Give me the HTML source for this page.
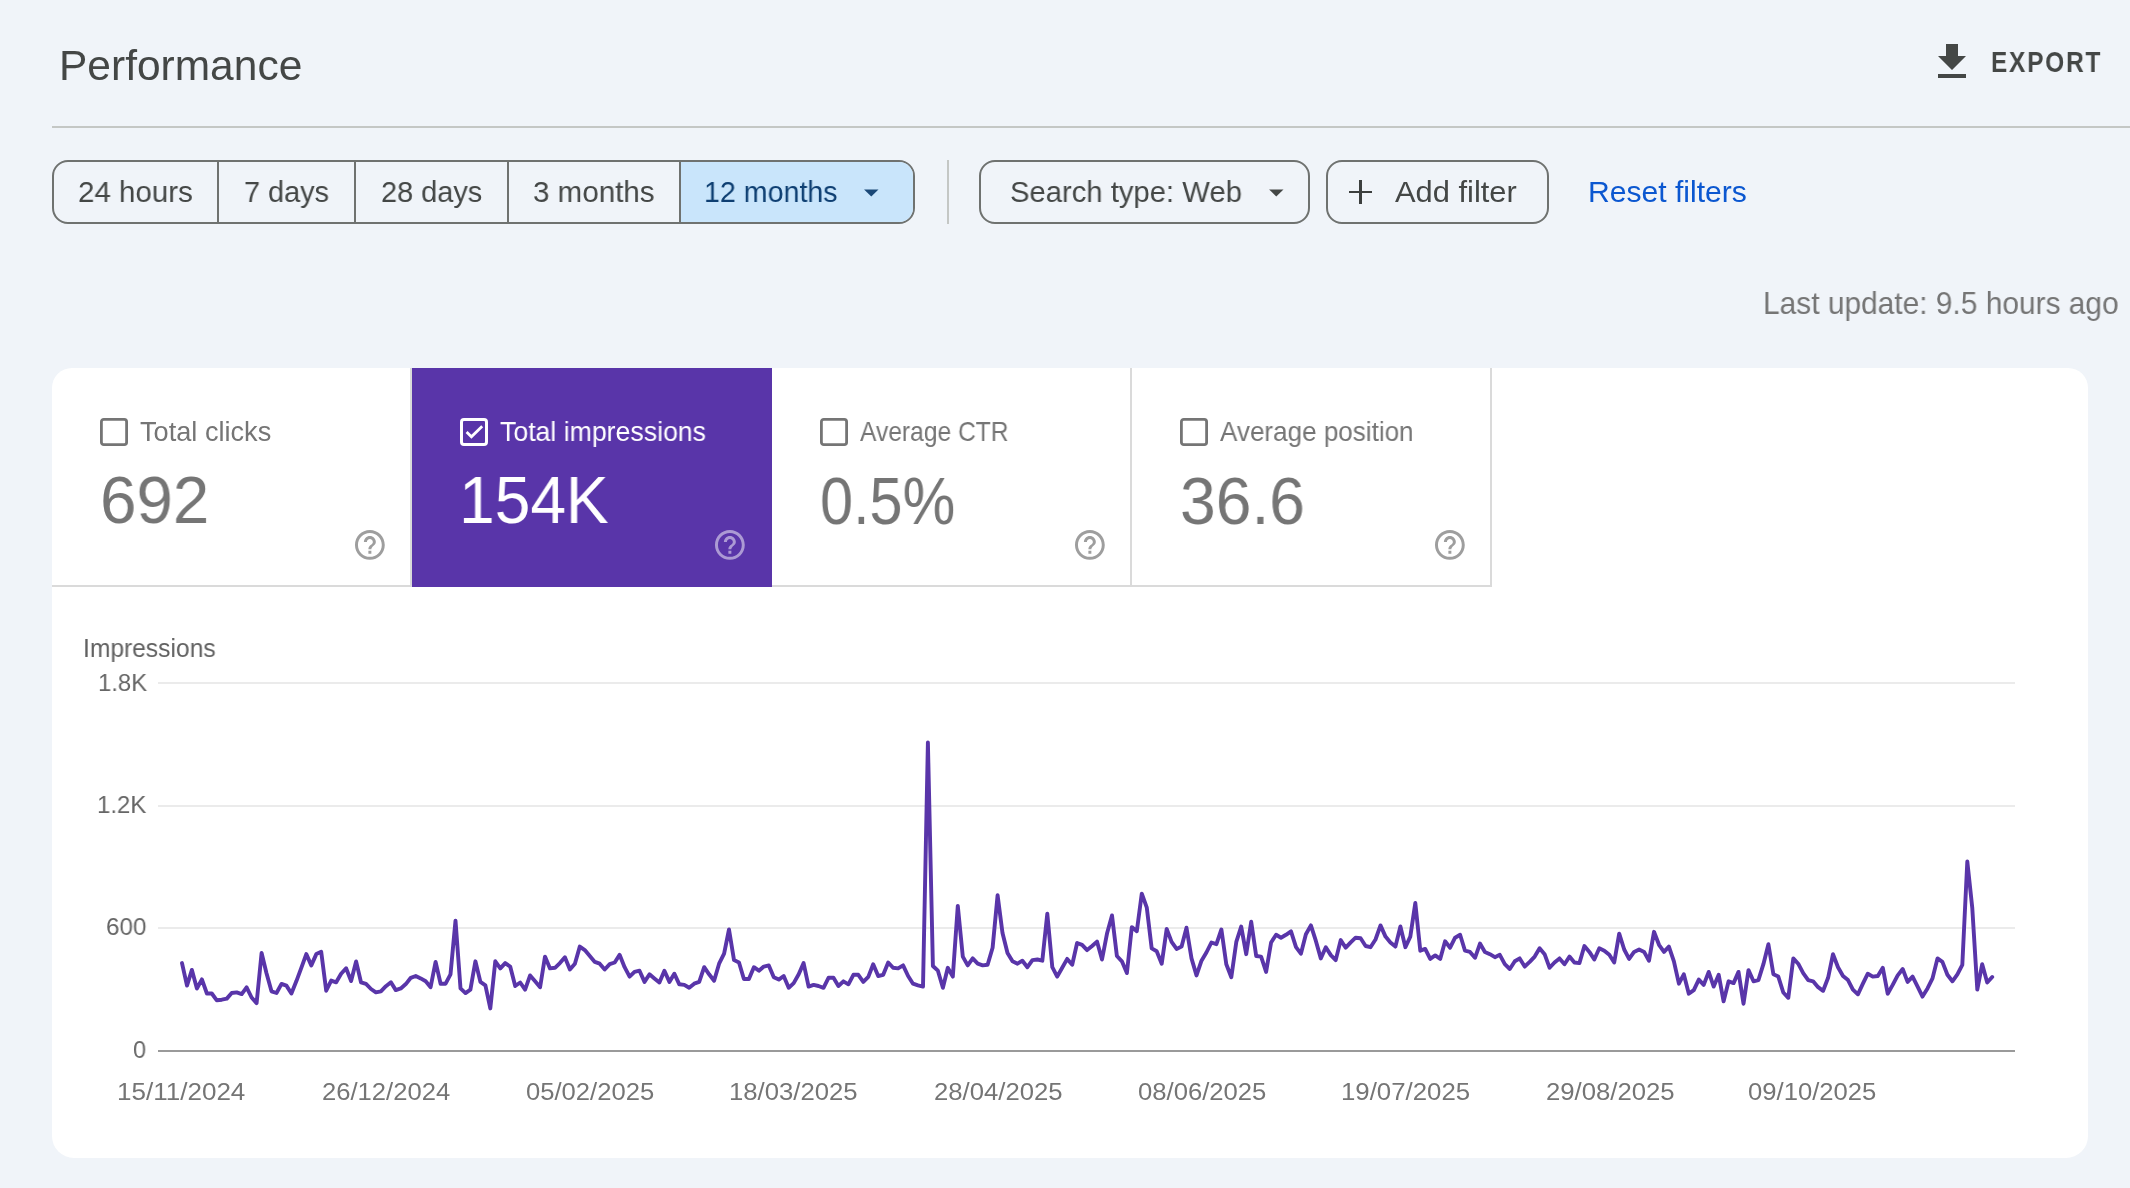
<!DOCTYPE html>
<html><head><meta charset="utf-8">
<style>
html,body{margin:0;padding:0;}
body{width:2130px;height:1188px;background:#f0f4f9;position:relative;overflow:hidden;font-family:"Liberation Sans",sans-serif;}
.t{position:absolute;white-space:nowrap;line-height:1;transform-origin:0 0;will-change:transform;}
.a{position:absolute;}
</style></head>
<body>

<div class="t" style="left:58.98px;top:45.00px;font-size:42.2px;color:#444746;letter-spacing:0px;transform:scaleX(1.0073)">Performance</div>
<svg class="a" style="left:1927.5px;top:38px" width="48" height="48" viewBox="0 0 24 24"><path fill="#444746" d="M19 9h-4V3H9v6H5l7 7 7-7zM5 18v2h14v-2H5z"/></svg>
<div class="t" style="left:1991.43px;top:48.10px;font-size:29.1px;font-weight:bold;color:#444746;letter-spacing:2.2px;transform:scaleX(0.8376)">EXPORT</div>
<div class="a" style="left:52px;top:126px;width:2078px;height:2px;background:#c4c7c5"></div>
<div class="a" style="left:52px;top:160px;width:863px;height:64px;box-sizing:border-box;border:2px solid #6f7270;border-radius:16px;overflow:hidden"><div class="a" style="left:627px;top:0;width:236px;height:60px;background:#c9e5fb"></div><div class="a" style="left:163px;top:0;width:2px;height:60px;background:#6f7270"></div><div class="a" style="left:300px;top:0;width:2px;height:60px;background:#6f7270"></div><div class="a" style="left:453px;top:0;width:2px;height:60px;background:#6f7270"></div><div class="a" style="left:625px;top:0;width:2px;height:60px;background:#6f7270"></div></div>
<div class="t" style="left:77.79px;top:176.60px;font-size:30.1px;color:#444746;letter-spacing:0px;transform:scaleX(0.9812)">24 hours</div>
<div class="t" style="left:244.19px;top:176.60px;font-size:30.1px;color:#444746;letter-spacing:0px;transform:scaleX(0.9601)">7 days</div>
<div class="t" style="left:380.72px;top:176.60px;font-size:30.1px;color:#444746;letter-spacing:0px;transform:scaleX(0.9615)">28 days</div>
<div class="t" style="left:533.31px;top:176.60px;font-size:30.1px;color:#444746;letter-spacing:0px;transform:scaleX(0.9818)">3 months</div>
<div class="t" style="left:703.66px;top:176.80px;font-size:30.1px;color:#0e3f72;letter-spacing:0px;transform:scaleX(0.9501)">12 months</div>
<svg class="a" style="left:853.6px;top:174.6px" width="34.56" height="34.56" viewBox="0 0 24 24"><path fill="#1a4877" d="M7 10l5 5 5-5z"/></svg>
<div class="a" style="left:947px;top:160px;width:2px;height:64px;background:#c4c7c5"></div>
<div class="a" style="left:979px;top:160px;width:331px;height:64px;box-sizing:border-box;border:2px solid #6f7270;border-radius:16px"></div>
<div class="t" style="left:1010.48px;top:176.80px;font-size:30.1px;color:#444746;letter-spacing:0px;transform:scaleX(0.9717)">Search type: Web</div>
<svg class="a" style="left:1259.2px;top:174.6px" width="34.56" height="34.56" viewBox="0 0 24 24"><path fill="#444746" d="M7 10l5 5 5-5z"/></svg>
<div class="a" style="left:1326px;top:160px;width:223px;height:64px;box-sizing:border-box;border:2px solid #6f7270;border-radius:16px"></div>
<div class="a" style="left:1348.5px;top:190.5px;width:23.8px;height:2.9px;background:#3c3f3e"></div>
<div class="a" style="left:1359px;top:180.1px;width:2.9px;height:23.7px;background:#3c3f3e"></div>
<div class="t" style="left:1395.04px;top:176.80px;font-size:30.1px;color:#444746;letter-spacing:0px;transform:scaleX(1.0252)">Add filter</div>
<div class="t" style="left:1587.79px;top:177.10px;font-size:30.0px;color:#0b57d0;letter-spacing:0px;transform:scaleX(1.0033)">Reset filters</div>
<div class="t" style="left:1762.72px;top:287.70px;font-size:31.1px;color:#757575;letter-spacing:0px;transform:scaleX(0.9613)">Last update: 9.5 hours ago</div>
<div class="a" style="left:52px;top:368px;width:2036px;height:790px;background:#fff;border-radius:20px 20px 22px 22px;overflow:hidden">
<div class="a" style="left:0;top:217px;width:1440px;height:2px;background:#dadada"></div>
<div class="a" style="left:358px;top:0;width:2px;height:219px;background:#dadada"></div>
<div class="a" style="left:360px;top:0;width:360px;height:219px;background:#5935a9"></div>
<div class="a" style="left:1078px;top:0;width:2px;height:219px;background:#dadada"></div>
<div class="a" style="left:1438px;top:0;width:2px;height:219px;background:#dadada"></div>
</div>
<svg class="a" style="left:100px;top:418px" width="28" height="28" viewBox="0 0 28 28"><rect x="1.4" y="1.4" width="25.2" height="25.2" rx="2.4" fill="none" stroke="#757575" stroke-width="2.8"/></svg>
<svg class="a" style="left:352.07px;top:527.02px" width="35.76" height="35.76" viewBox="0 0 24 24"><path fill="#9e9e9e" d="M11 18h2v-2h-2v2zm1-16C6.48 2 2 6.48 2 12s4.48 10 10 10 10-4.48 10-10S17.52 2 12 2zm0 18c-4.41 0-8-3.59-8-8s3.59-8 8-8 8 3.59 8 8-3.59 8-8 8zm0-14c-2.21 0-4 1.79-4 4h2c0-1.1.9-2 2-2s2 .9 2 2c0 2-3 1.75-3 5h2c0-2.25 3-2.5 3-5 0-2.21-1.79-4-4-4z"/></svg>
<svg class="a" style="left:460px;top:418px" width="28" height="28" viewBox="0 0 28 28"><rect x="1.5" y="1.5" width="25" height="25" rx="2.5" fill="none" stroke="#fff" stroke-width="3"/><path d="M6.6 14.1L11.4 18.8L22.2 8.2" fill="none" stroke="#fff" stroke-width="2.8"/></svg>
<svg class="a" style="left:712.07px;top:527.02px" width="35.76" height="35.76" viewBox="0 0 24 24"><path fill="rgba(255,255,255,0.5)" d="M11 18h2v-2h-2v2zm1-16C6.48 2 2 6.48 2 12s4.48 10 10 10 10-4.48 10-10S17.52 2 12 2zm0 18c-4.41 0-8-3.59-8-8s3.59-8 8-8 8 3.59 8 8-3.59 8-8 8zm0-14c-2.21 0-4 1.79-4 4h2c0-1.1.9-2 2-2s2 .9 2 2c0 2-3 1.75-3 5h2c0-2.25 3-2.5 3-5 0-2.21-1.79-4-4-4z"/></svg>
<svg class="a" style="left:820px;top:418px" width="28" height="28" viewBox="0 0 28 28"><rect x="1.4" y="1.4" width="25.2" height="25.2" rx="2.4" fill="none" stroke="#757575" stroke-width="2.8"/></svg>
<svg class="a" style="left:1072.07px;top:527.02px" width="35.76" height="35.76" viewBox="0 0 24 24"><path fill="#9e9e9e" d="M11 18h2v-2h-2v2zm1-16C6.48 2 2 6.48 2 12s4.48 10 10 10 10-4.48 10-10S17.52 2 12 2zm0 18c-4.41 0-8-3.59-8-8s3.59-8 8-8 8 3.59 8 8-3.59 8-8 8zm0-14c-2.21 0-4 1.79-4 4h2c0-1.1.9-2 2-2s2 .9 2 2c0 2-3 1.75-3 5h2c0-2.25 3-2.5 3-5 0-2.21-1.79-4-4-4z"/></svg>
<svg class="a" style="left:1180px;top:418px" width="28" height="28" viewBox="0 0 28 28"><rect x="1.4" y="1.4" width="25.2" height="25.2" rx="2.4" fill="none" stroke="#757575" stroke-width="2.8"/></svg>
<svg class="a" style="left:1432.07px;top:527.02px" width="35.76" height="35.76" viewBox="0 0 24 24"><path fill="#9e9e9e" d="M11 18h2v-2h-2v2zm1-16C6.48 2 2 6.48 2 12s4.48 10 10 10 10-4.48 10-10S17.52 2 12 2zm0 18c-4.41 0-8-3.59-8-8s3.59-8 8-8 8 3.59 8 8-3.59 8-8 8zm0-14c-2.21 0-4 1.79-4 4h2c0-1.1.9-2 2-2s2 .9 2 2c0 2-3 1.75-3 5h2c0-2.25 3-2.5 3-5 0-2.21-1.79-4-4-4z"/></svg>
<div class="t" style="left:139.68px;top:418.90px;font-size:26.9px;color:#757575;letter-spacing:0px;transform:scaleX(1.0096)">Total clicks</div>
<div class="t" style="left:500.00px;top:418.90px;font-size:26.9px;color:#ffffff;letter-spacing:0px;transform:scaleX(0.9915)">Total impressions</div>
<div class="t" style="left:860.31px;top:418.90px;font-size:26.9px;color:#757575;letter-spacing:0px;transform:scaleX(0.9145)">Average CTR</div>
<div class="t" style="left:1220.29px;top:418.90px;font-size:26.9px;color:#757575;letter-spacing:0px;transform:scaleX(0.9687)">Average position</div>
<div class="t" style="left:100.43px;top:467.30px;font-size:66.0px;color:#757575;letter-spacing:0px;transform:scaleX(0.9916)">692</div>
<div class="t" style="left:459.31px;top:467.20px;font-size:66.0px;color:#ffffff;letter-spacing:0px;transform:scaleX(0.9711)">154K</div>
<div class="t" style="left:820.36px;top:467.50px;font-size:66.0px;color:#757575;letter-spacing:0px;transform:scaleX(0.8996)">0.5%</div>
<div class="t" style="left:1180.15px;top:467.50px;font-size:66.0px;color:#757575;letter-spacing:0px;transform:scaleX(0.9723)">36.6</div>
<div class="t" style="left:83.17px;top:635.90px;font-size:24.9px;color:#616161;letter-spacing:0px;transform:scaleX(0.9883)">Impressions</div>
<div class="a" style="left:158px;top:682px;width:1857px;height:2px;background:#ebebeb"></div>
<div class="a" style="left:158px;top:805px;width:1857px;height:2px;background:#ebebeb"></div>
<div class="a" style="left:158px;top:927px;width:1857px;height:2px;background:#ebebeb"></div>
<div class="a" style="left:158px;top:1050px;width:1857px;height:2px;background:#9a9a9a"></div>
<div class="t" style="left:97.58px;top:670.70px;font-size:24.7px;color:#666666;letter-spacing:0px;transform:scaleX(0.9685)">1.8K</div>
<div class="t" style="left:97.47px;top:792.90px;font-size:24.7px;color:#666666;letter-spacing:0px;transform:scaleX(0.9726)">1.2K</div>
<div class="t" style="left:105.60px;top:915.40px;font-size:24.7px;color:#666666;letter-spacing:0px;transform:scaleX(0.9804)">600</div>
<div class="t" style="left:132.64px;top:1037.90px;font-size:24.7px;color:#666666;letter-spacing:0px;transform:scaleX(0.9514)">0</div>
<div class="t" style="left:117.11px;top:1080.00px;font-size:24.4px;color:#757575;letter-spacing:0px;transform:scaleX(1.0671)">15/11/2024</div>
<div class="t" style="left:321.74px;top:1080.00px;font-size:24.4px;color:#757575;letter-spacing:0px;transform:scaleX(1.0496)">26/12/2024</div>
<div class="t" style="left:526.23px;top:1080.00px;font-size:24.4px;color:#757575;letter-spacing:0px;transform:scaleX(1.0499)">05/02/2025</div>
<div class="t" style="left:729.43px;top:1080.00px;font-size:24.4px;color:#757575;letter-spacing:0px;transform:scaleX(1.0540)">18/03/2025</div>
<div class="t" style="left:934.13px;top:1080.00px;font-size:24.4px;color:#757575;letter-spacing:0px;transform:scaleX(1.0532)">28/04/2025</div>
<div class="t" style="left:1138.32px;top:1080.00px;font-size:24.4px;color:#757575;letter-spacing:0px;transform:scaleX(1.0516)">08/06/2025</div>
<div class="t" style="left:1340.93px;top:1080.00px;font-size:24.4px;color:#757575;letter-spacing:0px;transform:scaleX(1.0574)">19/07/2025</div>
<div class="t" style="left:1545.53px;top:1080.00px;font-size:24.4px;color:#757575;letter-spacing:0px;transform:scaleX(1.0540)">29/08/2025</div>
<div class="t" style="left:1747.63px;top:1080.00px;font-size:24.4px;color:#757575;letter-spacing:0px;transform:scaleX(1.0508)">09/10/2025</div>
<svg class="a" style="left:0;top:0" width="2130" height="1188"><path d="M182.0 963.1 L187.0 985.6 L191.9 969.9 L196.9 988.5 L201.9 979.4 L206.9 993.5 L211.8 993.5 L216.8 1000.3 L221.8 999.7 L226.8 998.6 L231.7 993.0 L236.7 992.4 L241.7 994.1 L246.6 987.3 L251.6 997.5 L256.6 1003.1 L261.6 953.0 L266.5 973.2 L271.5 991.3 L276.5 993.0 L281.5 983.9 L286.4 985.6 L291.4 993.5 L296.4 981.1 L301.4 967.6 L306.3 954.1 L311.3 965.4 L316.3 954.1 L321.2 951.8 L326.2 990.7 L331.2 980.6 L336.2 982.3 L341.1 973.8 L346.1 968.2 L351.1 981.1 L356.1 961.4 L361.0 982.3 L366.0 983.9 L371.0 989.0 L375.9 992.4 L380.9 991.3 L385.9 986.2 L390.9 982.3 L395.8 990.1 L400.8 988.4 L405.8 984.1 L410.8 977.8 L415.7 976.0 L420.7 978.4 L425.7 981.3 L430.6 987.2 L435.6 961.9 L440.6 983.7 L445.6 983.7 L450.5 974.3 L455.5 920.6 L460.5 988.4 L465.5 993.1 L470.4 989.6 L475.4 961.3 L480.4 981.9 L485.4 985.4 L490.3 1008.4 L495.3 961.3 L500.3 968.4 L505.2 963.1 L510.2 966.6 L515.2 986.0 L520.2 982.5 L525.1 989.6 L530.1 975.4 L535.1 981.3 L540.1 987.2 L545.0 956.6 L550.0 968.4 L555.0 967.8 L559.9 963.1 L564.9 957.2 L569.9 969.5 L574.9 963.7 L579.8 946.6 L584.8 950.1 L589.8 956.0 L594.8 961.9 L599.7 963.7 L604.7 969.5 L609.7 964.2 L614.7 962.5 L619.6 954.8 L624.6 967.2 L629.6 976.6 L634.5 971.9 L639.5 970.7 L644.5 981.9 L649.5 974.3 L654.4 978.4 L659.4 982.5 L664.4 970.7 L669.4 981.9 L674.3 973.7 L679.3 984.3 L684.3 984.9 L689.2 987.8 L694.2 983.7 L699.2 981.9 L704.2 967.2 L709.1 974.3 L714.1 980.7 L719.1 963.7 L724.1 953.6 L729.0 929.5 L734.0 960.1 L739.0 962.5 L743.9 979.0 L748.9 979.0 L753.9 967.2 L758.9 970.7 L763.8 966.6 L768.8 965.4 L773.8 977.2 L778.8 979.6 L783.7 976.0 L788.7 987.8 L793.7 983.1 L798.7 974.3 L803.6 963.1 L808.6 986.6 L813.6 984.9 L818.5 986.0 L823.5 987.8 L828.5 977.8 L833.5 977.8 L838.4 986.0 L843.4 981.3 L848.4 984.3 L853.4 974.8 L858.3 974.8 L863.3 981.9 L868.3 976.9 L873.2 964.2 L878.2 976.0 L883.2 974.8 L888.2 962.5 L893.1 967.8 L898.1 968.4 L903.1 965.4 L908.1 976.0 L913.0 983.7 L918.0 985.4 L923.0 986.6 L927.9 742.5 L932.9 966.0 L937.9 970.7 L942.9 987.8 L947.8 967.8 L952.8 976.6 L957.8 905.9 L962.8 956.6 L967.7 965.4 L972.7 958.4 L977.7 963.7 L982.7 965.4 L987.6 964.8 L992.6 947.7 L997.6 895.3 L1002.5 933.0 L1007.5 953.0 L1012.5 961.3 L1017.5 963.7 L1022.4 960.7 L1027.4 967.2 L1032.4 960.1 L1037.4 959.5 L1042.3 960.7 L1047.3 913.6 L1052.3 967.2 L1057.2 976.6 L1062.2 967.8 L1067.2 958.9 L1072.2 964.8 L1077.1 943.0 L1082.1 944.8 L1087.1 950.1 L1092.1 946.0 L1097.0 941.6 L1102.0 959.5 L1107.0 933.6 L1112.0 915.4 L1116.9 956.0 L1121.9 961.3 L1126.9 973.1 L1131.8 927.1 L1136.8 931.3 L1141.8 893.6 L1146.8 907.7 L1151.7 948.4 L1156.7 951.3 L1161.7 963.7 L1166.7 928.9 L1171.6 941.9 L1176.6 948.9 L1181.6 946.6 L1186.5 927.7 L1191.5 958.4 L1196.5 975.4 L1201.5 960.7 L1206.4 952.5 L1211.4 942.5 L1216.4 944.2 L1221.4 929.5 L1226.3 964.3 L1231.3 977.2 L1236.3 941.9 L1241.2 926.6 L1246.2 954.2 L1251.2 921.8 L1256.2 956.0 L1261.1 956.6 L1266.1 971.9 L1271.1 942.5 L1276.1 934.8 L1281.0 937.7 L1286.0 934.8 L1291.0 931.3 L1296.0 947.2 L1300.9 953.7 L1305.9 934.2 L1310.9 925.4 L1315.8 940.7 L1320.8 958.4 L1325.8 947.2 L1330.8 955.1 L1335.7 960.1 L1340.7 940.1 L1345.7 947.7 L1350.7 942.4 L1355.6 937.7 L1360.6 938.3 L1365.6 946.0 L1370.5 947.2 L1375.5 939.5 L1380.5 925.4 L1385.5 936.6 L1390.4 942.4 L1395.4 946.6 L1400.4 926.5 L1405.4 947.2 L1410.3 936.6 L1415.3 903.0 L1420.3 950.7 L1425.2 948.9 L1430.2 958.9 L1435.2 955.4 L1440.2 958.9 L1445.1 941.3 L1450.1 947.7 L1455.1 937.7 L1460.1 934.8 L1465.0 950.7 L1470.0 951.9 L1475.0 957.8 L1480.0 943.6 L1484.9 951.9 L1489.9 954.2 L1494.9 957.2 L1499.8 954.8 L1504.8 964.2 L1509.8 969.0 L1514.8 961.3 L1519.7 958.4 L1524.7 966.6 L1529.7 961.9 L1534.7 956.6 L1539.6 948.3 L1544.6 954.2 L1549.6 967.8 L1554.5 962.5 L1559.5 958.4 L1564.5 964.2 L1569.5 956.6 L1574.4 962.5 L1579.4 963.1 L1584.4 946.0 L1589.4 951.9 L1594.3 959.5 L1599.3 948.3 L1604.3 950.7 L1609.3 954.8 L1614.2 962.5 L1619.2 933.6 L1624.2 949.5 L1629.1 958.9 L1634.1 951.9 L1639.1 949.5 L1644.1 951.9 L1649.0 960.7 L1654.0 931.8 L1659.0 944.8 L1664.0 951.9 L1668.9 946.6 L1673.9 961.3 L1678.9 983.7 L1683.8 974.3 L1688.8 993.7 L1693.8 990.2 L1698.8 979.6 L1703.7 984.9 L1708.7 971.9 L1713.7 986.6 L1718.7 974.8 L1723.6 1001.4 L1728.6 981.3 L1733.6 983.1 L1738.5 971.9 L1743.5 1003.7 L1748.5 970.1 L1753.5 981.3 L1758.4 980.1 L1763.4 964.2 L1768.4 944.2 L1773.4 974.3 L1778.3 976.6 L1783.3 992.5 L1788.3 997.8 L1793.3 958.4 L1798.2 963.7 L1803.2 973.1 L1808.2 980.1 L1813.1 981.3 L1818.1 987.2 L1823.1 990.8 L1828.1 977.8 L1833.0 954.2 L1838.0 967.2 L1843.0 976.0 L1848.0 980.1 L1852.9 989.6 L1857.9 994.3 L1862.9 983.7 L1867.8 973.7 L1872.8 976.6 L1877.8 976.0 L1882.8 967.8 L1887.7 993.7 L1892.7 984.9 L1897.7 975.4 L1902.7 969.0 L1907.6 981.9 L1912.6 976.6 L1917.6 986.6 L1922.5 996.6 L1927.5 988.4 L1932.5 978.4 L1937.5 958.4 L1942.4 961.9 L1947.4 974.8 L1952.4 981.3 L1957.4 974.3 L1962.3 964.8 L1967.3 861.5 L1972.3 908.3 L1977.3 989.6 L1982.2 964.2 L1987.2 982.5 L1992.2 977.0" fill="none" stroke="#5935a9" stroke-width="3.9" stroke-linejoin="round" stroke-linecap="round"/></svg>
</body></html>
